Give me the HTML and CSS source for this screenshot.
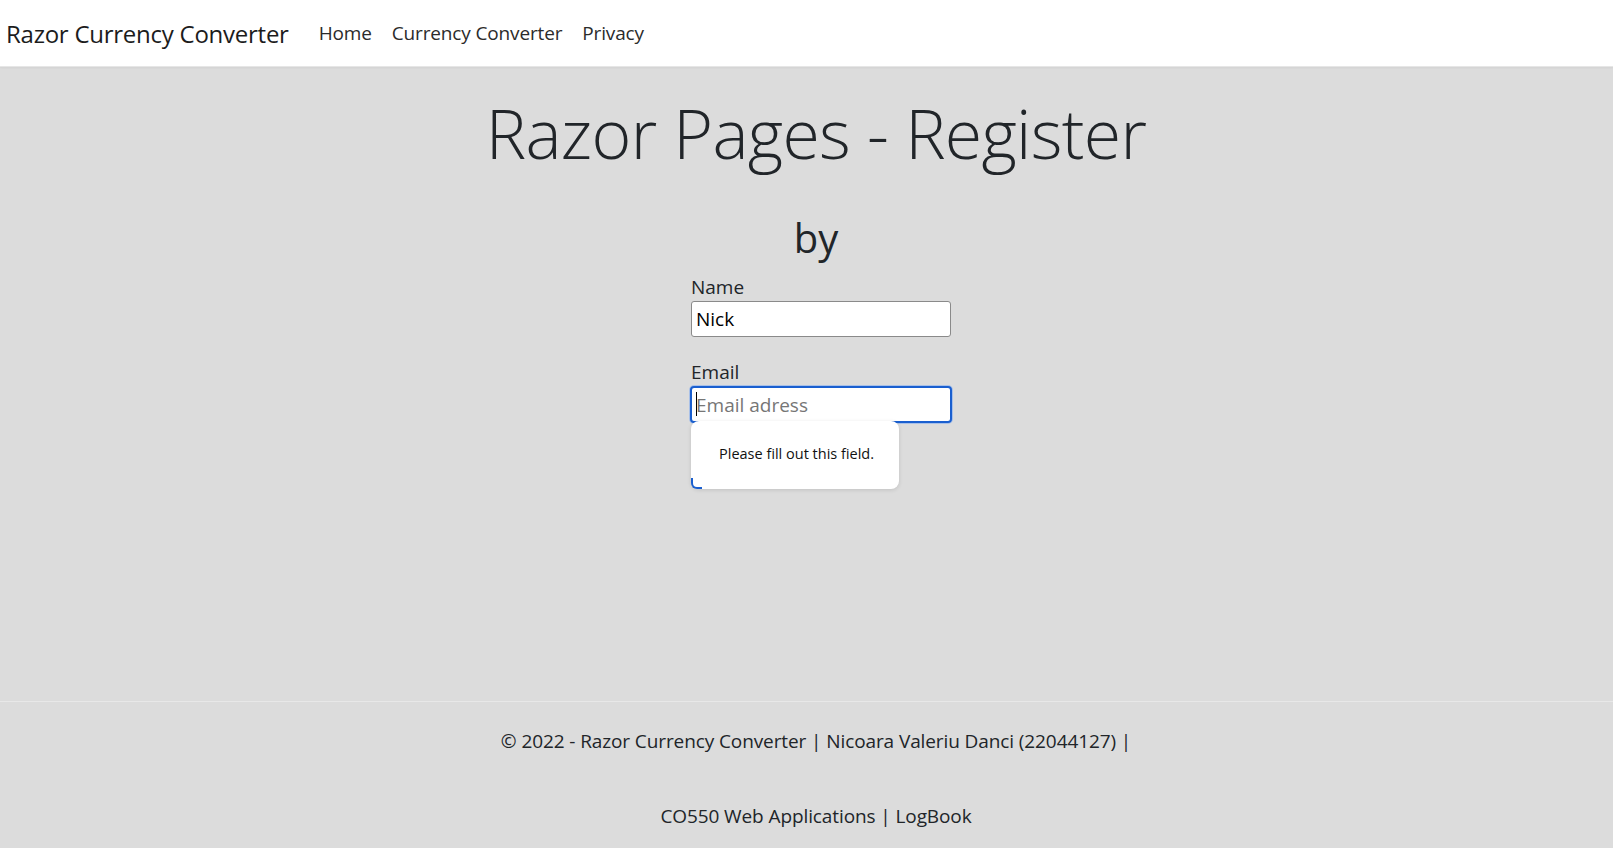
FILE: index.html
```html
<!DOCTYPE html>
<html lang="en">
<head>
<meta charset="utf-8">
<title>Razor Pages - Register</title>
<link rel="stylesheet" href="styles.css">
</head>
<body>
<header class="navbar">
  <a class="brand" href="#">Razor Currency Converter</a>
  <nav class="nav">
    <a class="nav-link" href="#">Home</a>
    <a class="nav-link" href="#">Currency Converter</a>
    <a class="nav-link" href="#">Privacy</a>
  </nav>
</header>
<main class="main">
  <h1 class="title">Razor Pages - Register</h1>
  <h2 class="by">by</h2>
  <form class="form">
    <label class="label" for="name">Name</label>
    <input class="input" id="name" type="text" value="Nick">
    <label class="label label-email" for="email">Email</label>
    <div class="field">
      <input class="input input-focus" id="email" type="email" placeholder="Email adress" required>
      <span class="caret"></span>
      <div class="bubble">Please fill out this field.</div>
    </div>
  </form>
</main>
<footer class="footer">
  <p class="footer-line">© 2022 - Razor Currency Converter | Nicoara Valeriu Danci (22044127) |</p>
  <p class="footer-line footer-line2">CO550 Web Applications | LogBook</p>
</footer>
</body>
</html>
```
FILE: styles.css
```css
* { box-sizing: border-box; }
html, body { margin: 0; padding: 0; }
body {
  font-family: "Open Sans", "Noto Sans", sans-serif;
  color: #212529;
  background: #dcdcdc;
  min-height: 100vh;
  display: flex;
  flex-direction: column;
  font-size: 20px;
}
a { color: inherit; text-decoration: none; }

.navbar {
  height: 67px;
  background: #ffffff;
  border-bottom: 1px solid #e6e6e6;
  box-shadow: 0 1px 2px rgba(0,0,0,0.05);
  display: flex;
  align-items: center;
  padding-left: 6px;
}
.brand {
  font-size: 24px;
  color: #1c1c1c;
  letter-spacing: -0.25px;
  margin-right: 20px;
}
.nav { display: flex; }
.nav-link {
  font-size: 19px;
  color: #2b2b2b;
  padding: 0 10px;
  letter-spacing: -0.15px;
}

.main {
  flex: 1;
  display: flex;
  flex-direction: column;
  align-items: center;
  padding-left: 19px;
}
.title {
  margin: 24px 0 0;
  font-size: 68px;
  font-weight: 300;
  line-height: 84px;
  letter-spacing: -0.7px;
  color: #212529;
}
.by {
  margin: 39px 0 0;
  font-size: 40px;
  font-weight: 400;
  line-height: 48px;
  color: #212529;
}
.form {
  width: 250px;
  margin-top: 11px;
  display: flex;
  flex-direction: column;
  align-items: flex-start;
}
.label {
  font-size: 19px;
  line-height: 28px;
  color: #212529;
}
.label-email { margin-top: 21px; }
.input {
  width: 260px;
  height: 36px;
  border: 1px solid #8a8a8a;
  border-radius: 3px;
  background: #fff;
  font-family: "Open Sans", "Noto Sans", sans-serif;
  font-size: 19px;
  padding: 0 4px;
  color: #000;
  outline: none;
}
.input::placeholder { color: #767676; }
.field {
  position: relative;
  margin-top: 0;
}
.input-focus {
  width: 262px;
  height: 37px;
  margin-left: -1px;
  border: 2px solid #1a5fcf;
  border-radius: 4px;
  box-shadow: 0 0 0 1px #a8c0e8;
}
.caret {
  position: absolute;
  left: 5px;
  top: 6px;
  width: 1px;
  height: 24px;
  background: #000;
}
.bubble {
  position: absolute;
  left: 0;
  top: 35px;
  width: 208px;
  height: 68px;
  background: #fff;
  border-radius: 8px;
  box-shadow: 0 1px 4px rgba(0,0,0,0.12);
  font-family: "Open Sans", "Noto Sans", sans-serif;
  font-size: 14.5px;
  color: #111;
  display: flex;
  align-items: center;
  padding-left: 28px;
  padding-bottom: 4px;
  letter-spacing: 0;
}
.bubble::after {
  content: "";
  position: absolute;
  left: 0;
  bottom: 0;
  width: 9px;
  height: 9px;
  border-left: 2px solid #1a5fcf;
  border-bottom: 2px solid #1a5fcf;
  border-bottom-left-radius: 6px;
}

.footer {
  border-top: 1px solid #e8e8e8;
  padding: 24px 0 17px 19px;
  text-align: center;
}
.footer-line {
  margin: 0;
  font-size: 19px;
  line-height: 30px;
  color: #212529;
  letter-spacing: -0.1px;
}
.footer-line2 { margin-top: 45px; }
```
